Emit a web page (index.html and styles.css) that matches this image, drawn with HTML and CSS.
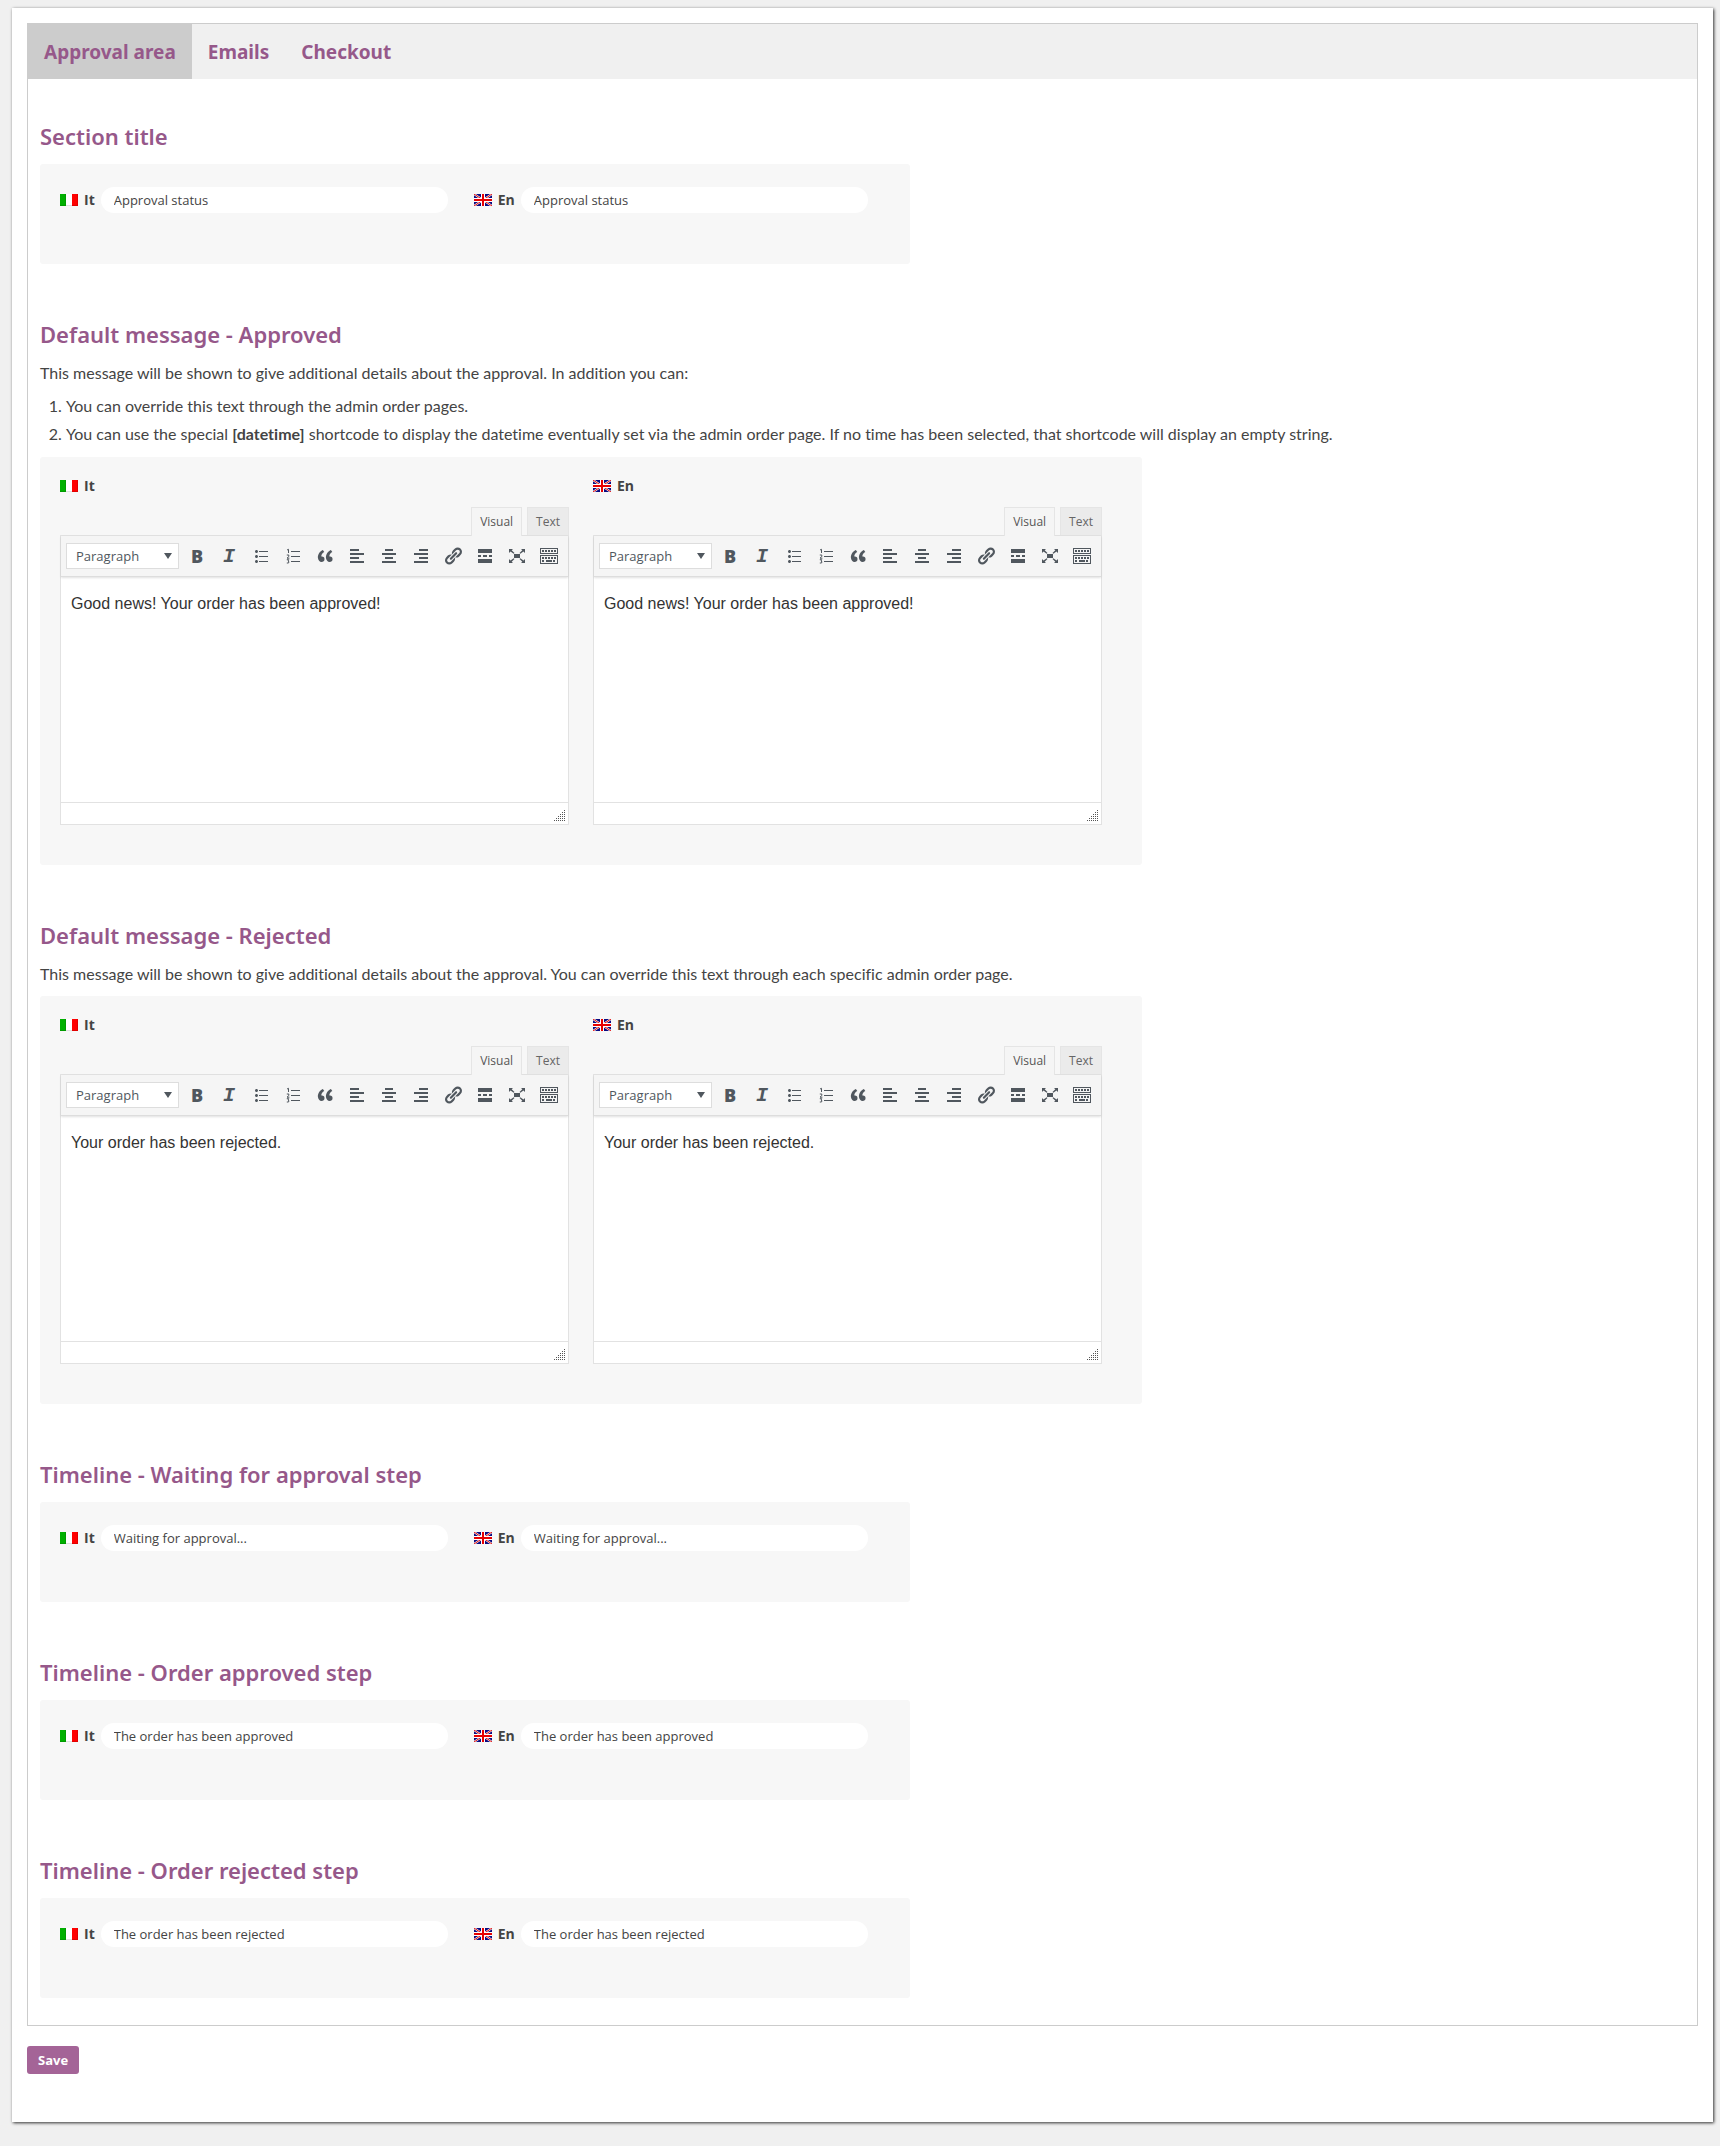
FILE: index.html
```
<!DOCTYPE html>
<html lang="en">
<head>
<meta charset="utf-8">
<title>Order approval settings</title>
<link rel="stylesheet" href="styles.css">
</head>
<body>
<svg class="sprite" aria-hidden="true">
  <symbol id="flag-it" viewBox="0 0 18 12">
    <path fill="#00b000" d="M0 0h6v12H0z"/><path fill="#fff" d="M6 0h6v12H6z"/><path fill="#f00" d="M12 0h6v12h-6z"/>
    <path fill="#000" opacity=".12" d="M0 11h18v1H0zM5 0h1v12H5zM17 0h1v12h-1z"/>
  </symbol>
  <symbol id="flag-en" viewBox="0 0 18 12">
    <path fill="#0a0a80" d="M0 0h18v12H0z"/>
    <path stroke="#fff" stroke-width="2" d="M0 0l18 12M18 0L0 12"/>
    <path stroke="#e00000" stroke-width="1" d="M0 0l18 12M18 0L0 12"/>
    <path fill="#fff" d="M7 0h4v12H7zM0 4h18v4H0z"/>
    <path fill="#e80000" d="M8 0h2v12H8zM0 5h18v2H0z"/>
  </symbol>
  <symbol id="i-ul" viewBox="0 0 20 20"><path d="M5.500 7C4.670 7 4 6.330 4 5.500 4 4.680 4.670 4 5.500 4 6.320 4 7 4.680 7 5.500 7 6.330 6.320 7 5.500 7zM8 5h9v1H8V5zm-2.500 7c-.83 0-1.500-.67-1.500-1.500C4 9.680 4.670 9 5.500 9c.82 0 1.500.68 1.500 1.500 0 .83-.68 1.500-1.500 1.500zM8 10h9v1H8v-1zm-2.500 7c-.83 0-1.500-.67-1.500-1.500 0-.82.67-1.500 1.500-1.500.82 0 1.500.68 1.500 1.500 0 .83-.68 1.500-1.500 1.500zM8 15h9v1H8v-1z"/></symbol>
  <symbol id="i-ol" viewBox="0 0 20 20"><path d="M8 5h9v1H8zM8 10h9v1H8zM8 15h9v1H8z"/><path class="marks" d="M4 4l1.500-.7V7M3.800 9h2v1.500l-1.800 1.700h2.400M3.800 13.700h2L5 15l1 .8-.5 1.200H3.800"/></symbol>
  <symbol id="i-quote" viewBox="0 0 20 20"><path d="M9.490 13.220c0-.74-.2-1.380-.61-1.900-.62-.78-1.830-.88-2.530-.72-.29-1.650 1.110-3.750 2.920-4.650L7.880 4c-2.730 1.300-5.420 4.280-4.960 8.050C3.210 14.430 4.590 16 6.540 16c.85 0 1.560-.25 2.120-.75s.83-1.180.83-2.030zm8.050 0c0-.74-.2-1.380-.61-1.900-.63-.78-1.830-.88-2.530-.72-.29-1.650 1.110-3.750 2.920-4.650L15.930 4c-2.730 1.300-5.410 4.280-4.950 8.050.29 2.380 1.660 3.950 3.610 3.950.85 0 1.560-.25 2.120-.75s.83-1.180.83-2.030z"/></symbol>
  <symbol id="i-left" viewBox="0 0 20 20"><path d="M12 5V3H3v2h9zm5 4V7H3v2h14zm-5 4v-2H3v2h9zm5 4v-2H3v2h14z"/></symbol>
  <symbol id="i-center" viewBox="0 0 20 20"><path d="M14 5V3H6v2h8zm3 4V7H3v2h14zm-3 4v-2H6v2h8zm3 4v-2H3v2h14z"/></symbol>
  <symbol id="i-right" viewBox="0 0 20 20"><path d="M17 5V3H8v2h9zm0 4V7H3v2h14zm0 4v-2H8v2h9zm0 4v-2H3v2h14z"/></symbol>
  <symbol id="i-link" viewBox="0 0 20 20"><path d="M17.740 2.760c1.680 1.690 1.680 4.410 0 6.100l-1.530 1.520c-1.120 1.120-2.700 1.470-4.140 1.090l2.620-2.610.76-.77.76-.76c.84-.84.84-2.200 0-3.040-.84-.85-2.200-.85-3.040 0l-.77.76-3.380 3.380c-.37-1.440-.02-3.020 1.100-4.140l1.520-1.530c1.690-1.680 4.420-1.680 6.100 0zM8.590 13.430l5.340-5.340c.42-.42.42-1.100 0-1.520-.44-.43-1.130-.39-1.530 0l-5.330 5.340c-.42.42-.42 1.100 0 1.520.44.43 1.130.39 1.520 0zm-.76 2.290l4.140-4.150c.38 1.440.03 3.020-1.090 4.140l-1.520 1.530c-1.690 1.680-4.410 1.680-6.100 0-1.680-1.680-1.680-4.420 0-6.100l1.530-1.520c1.120-1.120 2.700-1.470 4.140-1.100l-4.140 4.150c-.85.84-.85 2.200 0 3.050.84.84 2.200.84 3.040 0z"/></symbol>
  <symbol id="i-more" viewBox="0 0 20 20"><path d="M17 7V3H3v4h14zM6 11V9H3v2h3zm6 0V9H8v2h4zm5 0V9h-3v2h3zm0 6v-4H3v4h14z"/></symbol>
  <symbol id="i-full" viewBox="0 0 20 20"><path d="M7 8h6v4H7zM2 3h4L4.700 4.300 7.500 7l-.8.800L3.500 5.500 2 7zM18 3h-4l1.300 1.300L12.500 7l.8.800 3.200-2.300L18 7zM2 17h4l-1.300-1.300L7.500 13l-.8-.8-3.200 2.300L2 13zM18 17h-4l1.300-1.300-2.800-2.700.8-.8 3.200 2.300L18 13z"/></symbol>
  <symbol id="i-keys" viewBox="0 0 20 20"><path d="M19 2v6H1V2h18zm-1 5V3H2v4h16zM19 9v9H1V9h18zm-1 8v-7H2v7h16z"/><path class="keys" d="M3 5h14M3 12h14M3 15h3M14 15h3"/><path d="M7 14h6v2H7z"/></symbol>
</svg>

<main class="card">
  <form class="form">
    <div class="box">
      <nav class="tabs">
        <a class="tab is-active" href="#approval">Approval area</a>
        <a class="tab" href="#emails">Emails</a>
        <a class="tab" href="#checkout">Checkout</a>
      </nav>

      <div class="sections">
        <section>
          <h3>Section title</h3>
          <div class="panel fields">
            <div class="field"><label class="lang" for="title-it"><svg><use href="#flag-it"/></svg>It</label><input id="title-it" type="text" value="Approval status"></div>
            <div class="field"><label class="lang" for="title-en"><svg><use href="#flag-en"/></svg>En</label><input id="title-en" type="text" value="Approval status"></div>
          </div>
        </section>

        <section>
          <h3>Default message - Approved</h3>
          <p>This message will be shown to give additional details about the approval. In addition you can:</p>
          <ol>
            <li>You can override this text through the admin order pages.</li>
            <li>You can use the special <strong>[datetime]</strong> shortcode to display the datetime eventually set via the admin order page. If no time has been selected, that shortcode will display an empty string.</li>
          </ol>
          <div class="panel editors">
            <div class="editor">
              <label class="lang" for="approved-it"><svg><use href="#flag-it"/></svg>It</label>
              <div class="modes"><button type="button" class="is-active">Visual</button><button type="button">Text</button></div>
              <div class="frame">
                <div class="toolbar">
                  <select aria-label="Format"><option>Paragraph</option></select>
                  <button type="button" class="bold" title="Bold">B</button>
                  <button type="button" class="italic" title="Italic">I</button>
                  <button type="button" title="Bulleted list"><svg><use href="#i-ul"/></svg></button>
                  <button type="button" title="Numbered list"><svg><use href="#i-ol"/></svg></button>
                  <button type="button" title="Blockquote"><svg><use href="#i-quote"/></svg></button>
                  <button type="button" title="Align left"><svg><use href="#i-left"/></svg></button>
                  <button type="button" title="Align center"><svg><use href="#i-center"/></svg></button>
                  <button type="button" title="Align right"><svg><use href="#i-right"/></svg></button>
                  <button type="button" title="Insert link"><svg><use href="#i-link"/></svg></button>
                  <button type="button" title="Read more"><svg><use href="#i-more"/></svg></button>
                  <button type="button" title="Fullscreen"><svg><use href="#i-full"/></svg></button>
                  <button type="button" title="Toolbar toggle"><svg><use href="#i-keys"/></svg></button>
                </div>
                <textarea id="approved-it">Good news! Your order has been approved!</textarea>
                <div class="status"><svg class="grip" viewBox="0 0 11 11"><path d="M10 .5h1M8 2.500h3M6 4.500h5M4 6.500h7M2 8.500h9M0 10.500h11"/></svg></div>
              </div>
            </div>
            <div class="editor">
              <label class="lang" for="approved-en"><svg><use href="#flag-en"/></svg>En</label>
              <div class="modes"><button type="button" class="is-active">Visual</button><button type="button">Text</button></div>
              <div class="frame">
                <div class="toolbar">
                  <select aria-label="Format"><option>Paragraph</option></select>
                  <button type="button" class="bold" title="Bold">B</button>
                  <button type="button" class="italic" title="Italic">I</button>
                  <button type="button" title="Bulleted list"><svg><use href="#i-ul"/></svg></button>
                  <button type="button" title="Numbered list"><svg><use href="#i-ol"/></svg></button>
                  <button type="button" title="Blockquote"><svg><use href="#i-quote"/></svg></button>
                  <button type="button" title="Align left"><svg><use href="#i-left"/></svg></button>
                  <button type="button" title="Align center"><svg><use href="#i-center"/></svg></button>
                  <button type="button" title="Align right"><svg><use href="#i-right"/></svg></button>
                  <button type="button" title="Insert link"><svg><use href="#i-link"/></svg></button>
                  <button type="button" title="Read more"><svg><use href="#i-more"/></svg></button>
                  <button type="button" title="Fullscreen"><svg><use href="#i-full"/></svg></button>
                  <button type="button" title="Toolbar toggle"><svg><use href="#i-keys"/></svg></button>
                </div>
                <textarea id="approved-en">Good news! Your order has been approved!</textarea>
                <div class="status"><svg class="grip" viewBox="0 0 11 11"><path d="M10 .5h1M8 2.500h3M6 4.500h5M4 6.500h7M2 8.500h9M0 10.500h11"/></svg></div>
              </div>
            </div>
          </div>
        </section>

        <section>
          <h3>Default message - Rejected</h3>
          <p>This message will be shown to give additional details about the approval. You can override this text through each specific admin order page.</p>
          <div class="panel editors">
            <div class="editor">
              <label class="lang" for="rejected-it"><svg><use href="#flag-it"/></svg>It</label>
              <div class="modes"><button type="button" class="is-active">Visual</button><button type="button">Text</button></div>
              <div class="frame">
                <div class="toolbar">
                  <select aria-label="Format"><option>Paragraph</option></select>
                  <button type="button" class="bold" title="Bold">B</button>
                  <button type="button" class="italic" title="Italic">I</button>
                  <button type="button" title="Bulleted list"><svg><use href="#i-ul"/></svg></button>
                  <button type="button" title="Numbered list"><svg><use href="#i-ol"/></svg></button>
                  <button type="button" title="Blockquote"><svg><use href="#i-quote"/></svg></button>
                  <button type="button" title="Align left"><svg><use href="#i-left"/></svg></button>
                  <button type="button" title="Align center"><svg><use href="#i-center"/></svg></button>
                  <button type="button" title="Align right"><svg><use href="#i-right"/></svg></button>
                  <button type="button" title="Insert link"><svg><use href="#i-link"/></svg></button>
                  <button type="button" title="Read more"><svg><use href="#i-more"/></svg></button>
                  <button type="button" title="Fullscreen"><svg><use href="#i-full"/></svg></button>
                  <button type="button" title="Toolbar toggle"><svg><use href="#i-keys"/></svg></button>
                </div>
                <textarea id="rejected-it">Your order has been rejected.</textarea>
                <div class="status"><svg class="grip" viewBox="0 0 11 11"><path d="M10 .5h1M8 2.500h3M6 4.500h5M4 6.500h7M2 8.500h9M0 10.500h11"/></svg></div>
              </div>
            </div>
            <div class="editor">
              <label class="lang" for="rejected-en"><svg><use href="#flag-en"/></svg>En</label>
              <div class="modes"><button type="button" class="is-active">Visual</button><button type="button">Text</button></div>
              <div class="frame">
                <div class="toolbar">
                  <select aria-label="Format"><option>Paragraph</option></select>
                  <button type="button" class="bold" title="Bold">B</button>
                  <button type="button" class="italic" title="Italic">I</button>
                  <button type="button" title="Bulleted list"><svg><use href="#i-ul"/></svg></button>
                  <button type="button" title="Numbered list"><svg><use href="#i-ol"/></svg></button>
                  <button type="button" title="Blockquote"><svg><use href="#i-quote"/></svg></button>
                  <button type="button" title="Align left"><svg><use href="#i-left"/></svg></button>
                  <button type="button" title="Align center"><svg><use href="#i-center"/></svg></button>
                  <button type="button" title="Align right"><svg><use href="#i-right"/></svg></button>
                  <button type="button" title="Insert link"><svg><use href="#i-link"/></svg></button>
                  <button type="button" title="Read more"><svg><use href="#i-more"/></svg></button>
                  <button type="button" title="Fullscreen"><svg><use href="#i-full"/></svg></button>
                  <button type="button" title="Toolbar toggle"><svg><use href="#i-keys"/></svg></button>
                </div>
                <textarea id="rejected-en">Your order has been rejected.</textarea>
                <div class="status"><svg class="grip" viewBox="0 0 11 11"><path d="M10 .5h1M8 2.500h3M6 4.500h5M4 6.500h7M2 8.500h9M0 10.500h11"/></svg></div>
              </div>
            </div>
          </div>
        </section>

        <section>
          <h3>Timeline - Waiting for approval step</h3>
          <div class="panel fields">
            <div class="field"><label class="lang" for="wait-it"><svg><use href="#flag-it"/></svg>It</label><input id="wait-it" type="text" value="Waiting for approval..."></div>
            <div class="field"><label class="lang" for="wait-en"><svg><use href="#flag-en"/></svg>En</label><input id="wait-en" type="text" value="Waiting for approval..."></div>
          </div>
        </section>

        <section>
          <h3>Timeline - Order approved step</h3>
          <div class="panel fields">
            <div class="field"><label class="lang" for="ok-it"><svg><use href="#flag-it"/></svg>It</label><input id="ok-it" type="text" value="The order has been approved"></div>
            <div class="field"><label class="lang" for="ok-en"><svg><use href="#flag-en"/></svg>En</label><input id="ok-en" type="text" value="The order has been approved"></div>
          </div>
        </section>

        <section>
          <h3>Timeline - Order rejected step</h3>
          <div class="panel fields">
            <div class="field"><label class="lang" for="no-it"><svg><use href="#flag-it"/></svg>It</label><input id="no-it" type="text" value="The order has been rejected"></div>
            <div class="field"><label class="lang" for="no-en"><svg><use href="#flag-en"/></svg>En</label><input id="no-en" type="text" value="The order has been rejected"></div>
          </div>
        </section>
      </div>
    </div>
    <button class="save" type="submit">Save</button>
  </form>
</main>
</body>
</html>
```
FILE: styles.css
```
* { box-sizing: border-box; }

body {
  margin: 0;
  padding: 8px 7px 24px 12px;
  background: #f0f0f0;
  color: #444;
  font: 13px/20px "Open Sans", "Noto Sans", sans-serif;
}

button, input, select, textarea { font: inherit; color: inherit; margin: 0; }

.sprite { position: absolute; width: 0; height: 0; }

.card {
  padding: 15px 15px 48px;
  background: #fff;
  box-shadow: 1px 1px 3px rgba(0, 0, 0, .8);
}

.box { border: 1px solid #ccc; }

.tabs {
  display: flex;
  background: #f0f0f0;
}

.tab {
  padding: 15px 16px 13px;
  color: #96588a;
  font: 700 19px/27px "Noto Sans", sans-serif;
  text-decoration: none;
}

.tab.is-active { background: #ccc; }

.sections {
  display: flex;
  flex-direction: column;
  gap: 56px;
  padding: 43px 12px 27px;
}

h3 {
  margin: 0 0 14px;
  color: #96588a;
  font: 600 22px/28px "Noto Sans", sans-serif;
}

p, ol {
  margin: 0;
  font: 16px/20px Lato, sans-serif;
  font-variant-ligatures: none;
}

p { margin: 15px 0 12px; }

ol {
  margin: -3px 0 9px;
  padding-left: 26px;
  line-height: 28px;
}

.panel {
  background: #f7f7f7;
  border-radius: 3px;
}

.fields {
  display: flex;
  gap: 26px;
  max-width: 870px;
  min-height: 100px;
  padding: 23px 42px 23px 20px;
}

.field {
  display: flex;
  align-items: center;
  gap: 6px;
  height: 26px;
}

.lang {
  display: flex;
  align-items: center;
  gap: 6px;
  font-size: 14px;
  font-weight: 700;
}

.lang svg { width: 18px; height: 12px; }

input {
  width: 347px;
  height: 26px;
  padding: 0 13px;
  border: 0;
  border-radius: 13px;
  background: #fff;
}

.editors {
  display: grid;
  grid-template-columns: 1fr 1fr;
  gap: 24px;
  max-width: 1102px;
  padding: 19px 40px 40px 20px;
}

.modes {
  display: flex;
  justify-content: flex-end;
  gap: 5px;
  margin-top: 11px;
}

.modes button {
  height: 28px;
  padding: 0 8px;
  border: 1px solid #e5e5e5;
  border-bottom: 0;
  background: #ebebeb;
  color: #666;
  font-size: 12px;
}

.modes .is-active {
  position: relative;
  height: 29px;
  margin-bottom: -1px;
  background: #f5f5f5;
  color: #555;
}

.frame {
  display: flex;
  flex-direction: column;
  border: 1px solid #e2e2e2;
  background: #fff;
}

.toolbar {
  display: flex;
  align-items: center;
  gap: 4px;
  height: 41px;
  padding: 0 5px;
  background: #f5f5f5;
  border-bottom: 1px solid #ddd;
  box-shadow: 0 1px 2px rgba(0, 0, 0, .12);
  color: #50575e;
}

.toolbar select {
  appearance: none;
  width: 113px;
  height: 26px;
  padding: 0 9px;
  border: 1px solid #ddd;
  border-radius: 0;
  background: #fff url("data:image/svg+xml,%3Csvg xmlns='http://www.w3.org/2000/svg' width='8' height='6'%3E%3Cpath fill='%2350575e' d='M0 0h8L4 6z'/%3E%3C/svg%3E") no-repeat right 6px center;
  font-size: 13px;
  line-height: 20px;
}

.toolbar button {
  display: flex;
  flex: none;
  align-items: center;
  justify-content: center;
  width: 28px;
  height: 28px;
  padding: 0;
  border: 0;
  background: none;
}

.toolbar svg { width: 20px; height: 20px; fill: currentColor; }

.toolbar .bold { font: 800 18px/20px "Open Sans", sans-serif; }

.toolbar .italic {
  padding-top: 2px;
  font: italic 700 20px/20px "Liberation Mono", monospace;
}

.marks {
  fill: none;
  stroke: currentColor;
  stroke-width: 1;
}

.keys {
  fill: none;
  stroke: currentColor;
  stroke-width: 2;
  stroke-dasharray: 2 1;
}

textarea {
  display: block;
  height: 225px;
  padding: 17px 10px;
  border: 0;
  background: none;
  color: #333;
  font: 16px/20px "Liberation Sans", Arial, sans-serif;
  resize: none;
}

.status {
  display: flex;
  align-items: flex-end;
  justify-content: flex-end;
  height: 22px;
  padding: 3px;
  border-top: 1px solid #e2e2e2;
}

.grip {
  width: 11px;
  height: 11px;
  fill: none;
  stroke: #555;
  stroke-width: 1;
  stroke-dasharray: 1 1;
}

.save {
  display: block;
  height: 28px;
  margin-top: 20px;
  padding: 0 11px;
  border: 0;
  border-radius: 3px;
  background: #a46497;
  color: #fff;
  font-weight: 700;
}
```
